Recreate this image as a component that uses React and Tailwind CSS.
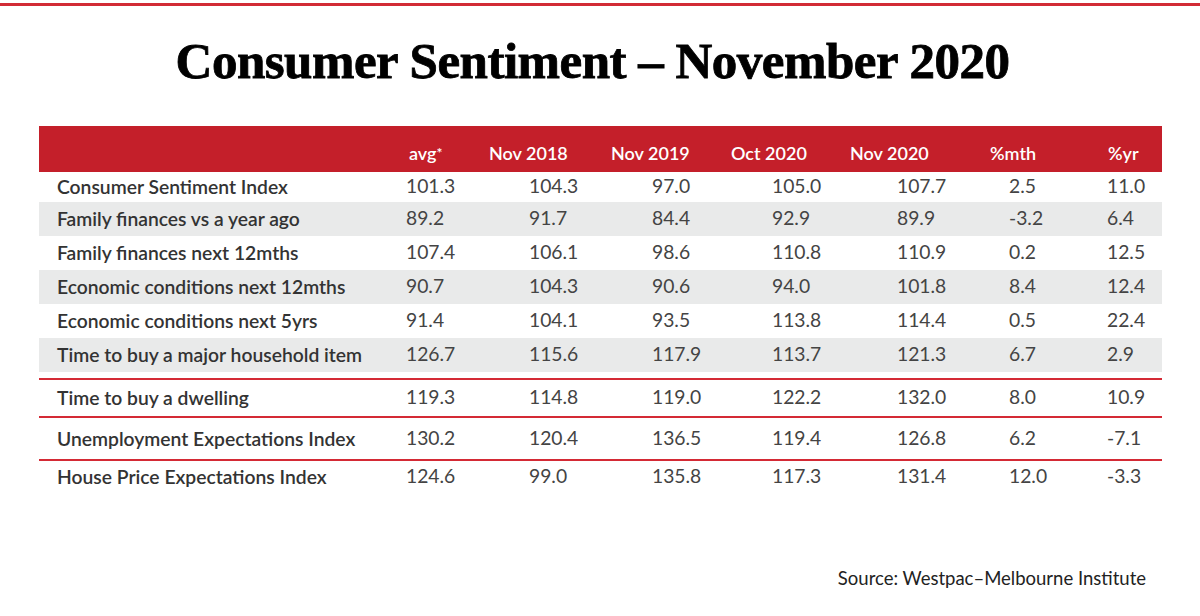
import React from 'react';

const rows = [
  ['Consumer Sentiment Index', '101.3', '104.3', '97.0', '105.0', '107.7', '2.5', '11.0'],
  ['Family finances vs a year ago', '89.2', '91.7', '84.4', '92.9', '89.9', '-3.2', '6.4'],
  ['Family finances next 12mths', '107.4', '106.1', '98.6', '110.8', '110.9', '0.2', '12.5'],
  ['Economic conditions next 12mths', '90.7', '104.3', '90.6', '94.0', '101.8', '8.4', '12.4'],
  ['Economic conditions next 5yrs', '91.4', '104.1', '93.5', '113.8', '114.4', '0.5', '22.4'],
  ['Time to buy a major household item', '126.7', '115.6', '117.9', '113.7', '121.3', '6.7', '2.9'],
];

const extra = [
  ['Time to buy a dwelling', '119.3', '114.8', '119.0', '122.2', '132.0', '8.0', '10.9', 'h-[38px]'],
  ['Unemployment Expectations Index', '130.2', '120.4', '136.5', '119.4', '126.8', '6.2', '-7.1', 'h-[43px]'],
  ['House Price Expectations Index', '124.6', '99.0', '135.8', '117.3', '131.4', '12.0', '-3.3', 'h-[34px]'],
];

const headers = ['avg*', 'Nov 2018', 'Nov 2019', 'Oct 2020', 'Nov 2020', '%mth', '%yr'];

const bodyCols = 'grid grid-cols-[367px_123px_123px_120px_125px_112px_98px_55px]';

function Row({ r, className }) {
  return (
    <div className={`${bodyCols} items-center ${className}`}>
      <div className="pl-[18px] font-semibold text-[#333] whitespace-nowrap">{r[0]}</div>
      {r.slice(1, 8).map((v, i) => (
        <div key={i} className="text-[#444] -translate-y-px">{v}</div>
      ))}
    </div>
  );
}

export default function App() {
  return (
    <div className="w-[1200px] h-[616px] bg-white flex flex-col font-['Lato','Open_Sans',sans-serif] text-[19.3px] leading-none">
      <div className="mt-[3px] h-[3px] bg-[#d22b35]" />
      <h1 className="mt-[27px] h-[56px] pr-[15px] text-center font-['Liberation_Serif',serif] font-bold text-[51px] leading-[56px] text-black tracking-[-0.5px] [-webkit-text-stroke:0.8px_black]">
        Consumer Sentiment – November 2020
      </h1>
      <div className="mt-[37px] ml-[39px] w-[1123px] flex flex-col">
        <div className="h-[46px] bg-[#c41f2a] grid grid-cols-[370px_80px_122px_120px_119px_140px_118px_54px] items-center pt-[7px] text-white font-semibold text-[18px]">
          <div />
          {headers.map(h => (
            <div key={h}>
              {h === 'avg*' ? (
                <span>avg<sup className="text-[14px] relative -top-[2px]">*</sup></span>
              ) : h}
            </div>
          ))}
        </div>
        {rows.map((r, i) => (
          <Row key={r[0]} r={r} className={`${i === 0 ? 'h-[30px]' : 'h-[34px]'} ${i % 2 === 1 ? 'bg-[#e9eaea]' : ''}`} />
        ))}
        <div className="mt-[6px]">
          {extra.map(r => (
            <Row key={r[0]} r={r} className={`border-t-2 border-[#d42a35] ${r[8]}`} />
          ))}
        </div>
      </div>
      <div className="mt-auto mb-[29px] pr-[54px] text-right text-[18.5px] text-[#222]">
        Source: Westpac–Melbourne Institute
      </div>
    </div>
  );
}
